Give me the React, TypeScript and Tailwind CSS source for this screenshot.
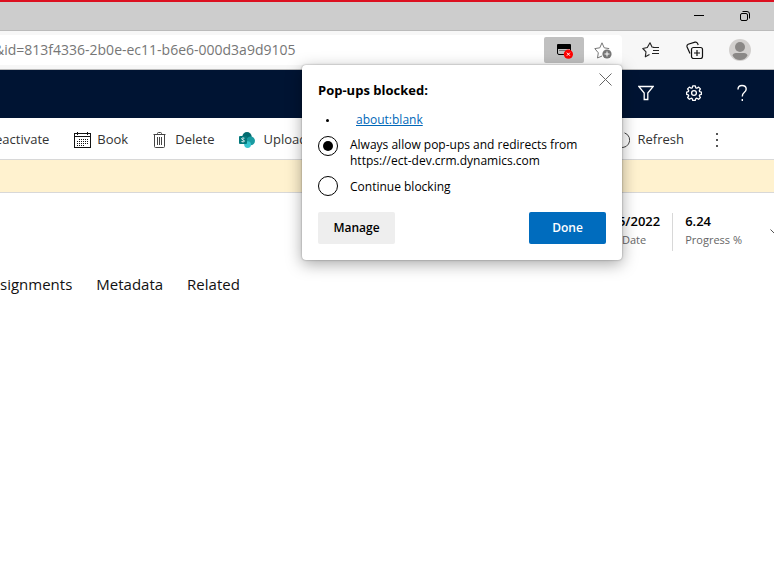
import React from 'react';

const CalendarIcon = () => (
  <svg width="17" height="16" viewBox="0 0 17 16" fill="none" stroke="#111" shapeRendering="crispEdges">
    <path d="M.5 1.5h16v14H.5zM.5 4.5h16M3.5 0v3M13.5 0v3" />
    <path d="M5 7.5h9M3 9.5h11M3 11.5h11M3 13.5h8" strokeDasharray="1 1" />
  </svg>
);

const TrashIcon = () => (
  <svg width="14" height="16" viewBox="0 0 14 16" fill="none" stroke="#444">
    <path d="M.5 2.5h12M4.5 2.5v-1q0-1 1-1h2q1 0 1 1v1M1.5 2.5v12q0 1 1 1h8q1 0 1-1v-12M4.5 5v8M6.5 5v8M8.5 5v8" />
  </svg>
);

const SharePointIcon = () => (
  <svg width="16" height="16" viewBox="0 0 16 16">
    <circle cx="8" cy="4.7" r="4.7" fill="#036c70" />
    <circle cx="11.6" cy="8.8" r="4.4" fill="#1a9ba1" />
    <circle cx="8.6" cy="12.6" r="3.4" fill="#37c6d0" />
    <rect x="0" y="4" width="8" height="8" rx="1" fill="#03787c" />
    <path d="M5.4 6.2Q2.6 5.4 2.7 6.8 2.8 7.6 4 7.9 5.5 8.3 5.4 9.1 5.2 10.5 2.5 9.6" fill="none" stroke="#fff" />
  </svg>
);

const RefreshIcon = () => (
  <svg width="16" height="16" viewBox="0 0 16 16" fill="none" stroke="#444">
    <path d="M10.5.9A7.5 7.5 0 1 1 4.5 1.5M4.5 5V1.5H1" />
  </svg>
);

const BlockedIcon = () => (
  <svg width="18" height="18" viewBox="0 0 18 18">
    <path d="M2 4q0-1 1-1h12q1 0 1 1v4H2z" fill="#000" />
    <path d="M2.5 8v4q0 1.500 1.500 1.500h5M15.500 8v2" fill="none" stroke="#000" />
    <path d="M4 9.500h7" stroke="#777" />
    <circle cx="13.400" cy="13.200" r="4.600" fill="#f00" />
    <path d="M11.900 11.700l3 3M14.900 11.700l-3 3" stroke="#fff" />
  </svg>
);

const AddFavoriteIcon = () => (
  <svg width="18" height="18" viewBox="0 0 18 18" fill="none" stroke="#777">
    <path d="M8 15l-4.500 2 .8-5.200L.8 7.600l5-.8L8 1.800l2.200 5 5 .8" strokeLinejoin="round" />
    <circle cx="13" cy="13" r="4.600" fill="#777" stroke="none" />
    <path d="M13 10.500v5M10.500 13h5" stroke="#fff" />
  </svg>
);

const FavoritesIcon = () => (
  <svg width="18" height="16" viewBox="0 0 18 16" fill="none" stroke="#222" strokeWidth="1.1" strokeLinejoin="round">
    <path d="M7.500 12.500L3.300 14.800l.7-5L.8 6.500l4.500-1L8 .8l2 4.200 2.500.5" />
    <path d="M11 5.500h6M11 8.500h6M10 11.500h7" />
  </svg>
);

const CollectionsIcon = () => (
  <svg width="18" height="18" viewBox="0 0 18 18" fill="none" stroke="#111" strokeWidth="1.2">
    <rect x="5.500" y="6.500" width="11" height="11" rx="2" />
    <path d="M11 9v6M8 12h6M4 12.500L1.100 6Q.5 4.200 2.200 3.300L9 1.200q1.800-.4 2.600 1.200l.6 1.600" />
  </svg>
);

const AvatarIcon = () => (
  <svg width="22" height="22" viewBox="0 0 22 22">
    <circle cx="11" cy="11" r="11" fill="#d2d0ce" />
    <circle cx="11" cy="8" r="5" fill="#8a8886" />
    <path d="M3.500 16.500Q4 14 7 14h8q3 0 3.500 2.500Q16 21 11 21t-7.500-4.500z" fill="#8a8886" />
  </svg>
);

const commands = [
  { label: 'Book', icon: <CalendarIcon />, gap: 'gap-1.5' },
  { label: 'Delete', icon: <TrashIcon />, gap: 'gap-2' },
  { label: 'Upload', icon: <SharePointIcon />, gap: 'gap-2' },
];

const PopupDialog = () => (
  <div
    role="dialog"
    aria-labelledby="popup-title"
    className="absolute right-0 top-full z-10 w-80 rounded bg-white p-4 pt-[15px] text-xs leading-4 text-black shadow-[0_4px_16px_rgba(0,0,0,0.35),0_0_2px_rgba(0,0,0,0.4)]"
  >
    <button aria-label="Close" className="absolute right-2.5 top-2">
      <svg width="13" height="13" viewBox="0 0 13 13" stroke="#666" fill="none">
        <path d="M.5.5l12 12M12.500.5l-12 12" />
      </svg>
    </button>
    <h2 id="popup-title" className="text-[13px] font-bold leading-5">Pop-ups blocked:</h2>
    <ul className="mt-3">
      <li className="flex items-center">
        <span className="ml-2 mr-[27px] h-[3px] w-[3px] rounded-full bg-black"></span>
        <a href="#" className="font-medium text-[#0067b8] underline">about:blank</a>
      </li>
    </ul>
    <label className="mt-2 flex items-start gap-3">
      <input
        type="radio"
        name="popups"
        defaultChecked
        className="grid h-5 w-5 shrink-0 appearance-none place-items-center rounded-full border border-black before:h-2.5 before:w-2.5 before:rounded-full checked:before:bg-black"
      />
      <span className="pt-px">
        Always allow pop-ups and redirects from
        <br />
        https://ect-dev.crm.dynamics.com
      </span>
    </label>
    <label className="mt-[7px] flex items-center gap-3">
      <input
        type="radio"
        name="popups"
        className="grid h-5 w-5 shrink-0 appearance-none place-items-center rounded-full border border-black before:h-2.5 before:w-2.5 before:rounded-full checked:before:bg-black"
      />
      <span className="pt-px">Continue blocking</span>
    </label>
    <div className="mt-4 flex justify-between font-semibold">
      <button className="h-8 w-[77px] rounded-xs bg-[#eee]">Manage</button>
      <button className="h-8 w-[77px] rounded-xs bg-[#006cbe] text-white">Done</button>
    </div>
  </div>
);

const BrowserChrome = () => (
  <header>
    <div className="flex h-[31px] items-center justify-end gap-9 border-b border-t-2 border-b-[#bbb] border-t-[#dc1020] bg-[#cdcdcd] pr-6">
      <button aria-label="Minimize">
        <svg width="10" height="10" viewBox="0 0 10 10" stroke="#000"><path d="M0 4.500h10" /></svg>
      </button>
      <button aria-label="Restore">
        <svg width="10" height="10" viewBox="0 0 10 10" fill="none" stroke="#000">
          <rect x=".5" y="2.500" width="7" height="7" rx="1.500" />
          <path d="M2.500.5H7q2.500 0 2.500 2.500v4.500" />
        </svg>
      </button>
    </div>
    <div className="flex h-[39px] items-center border-b border-[#bbb] bg-[#f7f7f7]">
      <div className="relative flex h-[30px] min-w-0 flex-1 items-center rounded-r bg-white">
        <input
          aria-label="Address"
          readOnly
          defaultValue="&id=813f4336-2b0e-ec11-b6e6-000d3a9d9105"
          className="-ml-1.5 min-w-0 flex-1 text-sm text-[#767676] outline-none"
        />
        <button aria-label="Pop-ups blocked" className="flex h-[26px] w-10 items-center justify-center rounded-xs bg-[#c0c0c0]">
          <BlockedIcon />
        </button>
        <button aria-label="Add to favorites" className="flex w-[38px] justify-center">
          <AddFavoriteIcon />
        </button>
        <PopupDialog />
      </div>
      <div className="flex w-[152px] items-center justify-between pl-5 pr-[23px]">
        <button aria-label="Favorites"><FavoritesIcon /></button>
        <button aria-label="Collections"><CollectionsIcon /></button>
        <button aria-label="Profile"><AvatarIcon /></button>
      </div>
    </div>
  </header>
);

const App = () => {
  return (
    <div className="min-h-screen overflow-hidden bg-white font-['Open_Sans','Noto_Sans',sans-serif] text-[#333]">
      <BrowserChrome />

      <nav className="flex h-12 items-center justify-end gap-8 bg-[#001433] pb-0.5 pr-6 text-white">
        <button aria-label="Filter">
          <svg width="16" height="16" viewBox="0 0 16 16" fill="none" stroke="#fff" strokeWidth="1.3">
            <path d="M.8 1.500h14.400L9.800 8v6.500H6.200V8z" />
          </svg>
        </button>
        <button aria-label="Settings">
          <svg width="16" height="16" viewBox="0 0 16 16" fill="none" stroke="#fff" strokeWidth="1.3" strokeLinejoin="round">
            <path d="M6.700.8h2.600l.5 2 1 .4 1.800-1.100 1.800 1.800-1.100 1.800.4 1 1.700.4v2.200l-1.700.5-.4 1 1.100 1.700-1.800 1.800-1.800-1.100-1 .4-.5 1.800H6.700l-.5-1.800-1-.4-1.800 1.100-1.800-1.800 1.100-1.700-.4-1-1.700-.5V7.100l1.700-.4.4-1-1.100-1.800 1.800-1.800 1.800 1.100 1-.4z" />
            <circle cx="8" cy="8" r="2.400" />
          </svg>
        </button>
        <button aria-label="Help">
          <svg width="16" height="18" viewBox="0 0 16 18" fill="none" stroke="#fff" strokeWidth="1.4">
            <path d="M4 5.500Q4 1.500 8 1.500T12.200 5Q12.200 7 10.200 8.500T8.300 12.500M8.300 15v2" />
          </svg>
        </button>
      </nav>

      <div className="flex h-[42px] items-center justify-between border-b border-[#d8d8d8] pr-14 pt-0.5 text-[13px]">
        <div className="flex items-center gap-[25px]">
          <button className="-ml-[5px]">eactivate</button>
          {commands.map((command) => (
            <button key={command.label} className={`flex items-center ${command.gap}`}>
              {command.icon}
              {command.label}
            </button>
          ))}
        </div>
        <div className="flex items-center gap-8">
          <button className="flex items-center gap-2">
            <RefreshIcon />
            Refresh
          </button>
          <button aria-label="More commands" className="grid gap-1">
            <span className="h-0.5 w-0.5 bg-[#555]"></span>
            <span className="h-0.5 w-0.5 bg-[#555]"></span>
            <span className="h-0.5 w-0.5 bg-[#555]"></span>
          </button>
        </div>
      </div>
      <div className="h-[33px] border-b border-[#d8d8d8] bg-[#fff2cf]"></div>

      <div className="mt-5 flex h-[38px] items-stretch justify-end">
        <div className="pr-3">
          <p className="text-[13px] font-semibold leading-4 text-black">5/2022</p>
          <p className="mt-[3px] pl-1 text-[11px] leading-4 text-[#666]">Date</p>
        </div>
        <div className="border-l border-[#d8d8d8] pl-3">
          <p className="text-[13px] font-semibold leading-4 text-black">6.24</p>
          <p className="mt-[3px] text-[11px] leading-4 text-[#666]">Progress %</p>
        </div>
        <button aria-label="Expand header" className="-mr-[5px] ml-7">
          <svg width="9" height="6" viewBox="0 0 9 6" fill="none" stroke="#555"><path d="M.5.5l4 4 4-4" /></svg>
        </button>
      </div>

      <div role="tablist" className="mt-[23px] flex gap-6 text-[15px] leading-5 text-[#111]">
        <button role="tab">signments</button>
        <button role="tab">Metadata</button>
        <button role="tab">Related</button>
      </div>
    </div>
  );
};

export default App;
